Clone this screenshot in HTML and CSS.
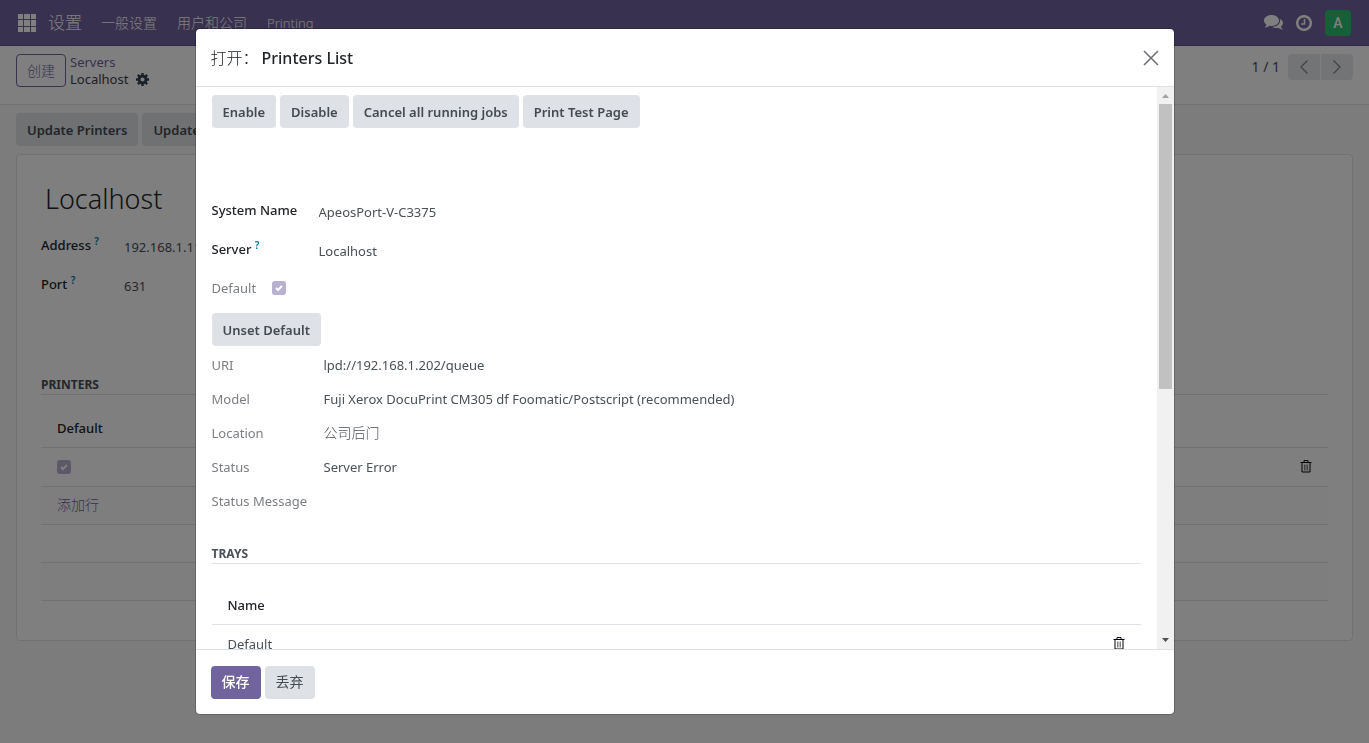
FILE: index.html
```html
<!DOCTYPE html>
<html lang="zh-CN">
<head>
<meta charset="utf-8">
<meta name="viewport" content="width=device-width, initial-scale=1">
<title>Printers List</title>
<link rel="stylesheet" href="styles.css">
</head>
<body>
<div class="app">
  <header class="navbar">
    <button class="nav-button apps" aria-label="Apps">
      <svg width="18" height="18" viewBox="0 0 18 18" fill="currentColor"><path d="M0 0h5v5H0zM6 0h6v5H6zM13 0h5v5h-5zM0 6h5v6H0zM6 6h6v6H6zM13 6h5v6h-5zM0 13h5v5H0zM6 13h6v5H6zM13 13h5v5h-5z"/></svg>
    </button>
    <a class="brand" href="#">设置</a>
    <nav class="menu">
      <a href="#">一般设置</a>
      <a href="#">用户和公司</a>
      <a href="#">Printing</a>
    </nav>
    <div class="systray">
      <button class="nav-button" aria-label="Messages">
        <svg width="19" height="16" viewBox="0 0 19 16" fill="currentColor"><path d="M7.500 0C11.700 0 15 2.400 15 5.500S11.700 11 7.500 11c-.7 0-1.300-.1-1.900-.2C4.200 11.800 2.700 12.400 1 12.600c-.4 0-.5-.4-.2-.6.800-.6 1.400-1.300 1.700-2.300C.9 8.700 0 7.200 0 5.500 0 2.400 3.300 0 7.500 0z"/><path d="M16.200 4c1.700.9 2.800 2.300 2.800 4 0 1.400-.9 2.700-2.200 3.700.3.900.8 1.500 1.600 2.100.3.200.1.600-.2.600-1.600-.1-3-.7-4.200-1.600-2.100.4-4.300.1-6-.9C12.700 12 16.700 9 16.200 4z"/></svg>
      </button>
      <button class="nav-button" aria-label="Activities">
        <svg width="16" height="16" viewBox="0 0 16 16" fill="none" stroke="currentColor"><circle cx="8" cy="8" r="6.800" stroke-width="2.500"/><path d="M8.500 4v5H5" stroke-width="1.600"/></svg>
      </button>
      <button class="avatar">A</button>
    </div>
  </header>

  <div class="control-panel">
    <button class="btn btn-outline">创建</button>
    <div class="breadcrumb">
      <a href="#">Servers</a>
      <div class="current">
        <span>Localhost</span>
        <svg width="13" height="13" viewBox="0 0 14 14" fill="none" stroke="currentColor"><circle cx="7" cy="7" r="3.700" stroke-width="3"/><path d="M7 0v2.500M7 11.500V14M0 7h2.500M11.500 7H14M2 2l1.800 1.800M10.200 10.200 12 12M12 2l-1.800 1.800M3.800 10.200 2 12" stroke-width="2.600"/></svg>
      </div>
    </div>
    <div class="pager">
      <span>1 / 1</span>
      <div class="pager-buttons">
        <button aria-label="Previous"><svg width="8" height="14" viewBox="0 0 8 14"><path d="M7.500.5 1 7l6.500 6.500" fill="none" stroke="currentColor" stroke-width="1.200"/></svg></button>
        <button aria-label="Next"><svg width="8" height="14" viewBox="0 0 8 14"><path d="M.5.500 7 7 .5 13.500" fill="none" stroke="currentColor" stroke-width="1.200"/></svg></button>
      </div>
    </div>
  </div>

  <main class="content">
    <div class="actions">
      <button class="btn">Update Printers</button>
      <button class="btn">Update Jobs</button>
    </div>
    <section class="sheet">
      <h1>Localhost</h1>
      <div class="fields server-fields">
        <label for="address">Address <sup>?</sup></label>
        <input id="address" value="192.168.1.11">
        <label for="port">Port <sup>?</sup></label>
        <input id="port" value="631">
      </div>
      <h2 class="separator printers-title">Printers</h2>
      <table class="list printers">
        <thead><tr><th>Default</th><th></th></tr></thead>
        <tbody>
          <tr>
            <td><input class="check" type="checkbox" checked disabled aria-label="Default"></td>
            <td class="trash-cell"><button class="trash" aria-label="Delete"><svg width="12" height="13" viewBox="0 0 12 13" fill="none" stroke="currentColor"><path d="M4 2V.5h4V2M2 3v9h8V3"/><path d="M.5 2.500h11"/><path d="M4.500 4.500v6M6 4.500v6M7.500 4.500v6" stroke-width=".5"/></svg></button></td>
          </tr>
          <tr><td><a class="cjk" href="#">添加行</a></td><td></td></tr>
          <tr><td></td><td></td></tr>
          <tr><td></td><td></td></tr>
        </tbody>
      </table>
    </section>
  </main>
</div>

<div class="backdrop">
  <div class="modal" role="dialog" aria-modal="true" aria-labelledby="modal-title">
    <header class="modal-header">
      <h3 id="modal-title"><span class="prefix">打开：</span>Printers List</h3>
      <button class="close" aria-label="Close"><svg width="16" height="16" viewBox="0 0 16 16"><path d="M1 1l14 14M15 1 1 15" fill="none" stroke="currentColor" stroke-width="1.600"/></svg></button>
    </header>
    <div class="modal-body">
      <div class="modal-content">
        <div class="actions">
          <button class="btn">Enable</button>
          <button class="btn">Disable</button>
          <button class="btn">Cancel all running jobs</button>
          <button class="btn">Print Test Page</button>
        </div>
        <div class="fields printer-fields">
          <label for="system-name">System Name</label>
          <input id="system-name" value="ApeosPort-V-C3375">
          <label for="server">Server <sup>?</sup></label>
          <input id="server" value="Localhost">
        </div>
        <div class="default-row">
          <label for="default">Default</label>
          <input id="default" class="check" type="checkbox" checked disabled>
        </div>
        <button class="btn">Unset Default</button>
        <dl class="details">
          <dt>URI</dt><dd>lpd://192.168.1.202/queue</dd>
          <dt>Model</dt><dd>Fuji Xerox DocuPrint CM305 df Foomatic/Postscript (recommended)</dd>
          <dt>Location</dt><dd class="cjk">公司后门</dd>
          <dt>Status</dt><dd>Server Error</dd>
          <dt>Status Message</dt><dd></dd>
        </dl>
        <h2 class="separator">Trays</h2>
        <table class="list trays">
          <thead><tr><th>Name</th><th></th></tr></thead>
          <tbody>
            <tr>
              <td>Default</td>
              <td class="trash-cell"><button class="trash" aria-label="Delete"><svg width="12" height="13" viewBox="0 0 12 13" fill="none" stroke="currentColor"><path d="M4 2V.5h4V2M2 3v9h8V3"/><path d="M.5 2.500h11"/><path d="M4.500 4.500v6M6 4.500v6M7.500 4.500v6" stroke-width=".5"/></svg></button></td>
            </tr>
          </tbody>
        </table>
      </div>
      <div class="scrollbar" aria-hidden="true">
        <svg width="7" height="4" viewBox="0 0 7 4"><path d="M0 4 3.500 0 7 4z" fill="#a3a3a3"/></svg>
        <div class="track"><div class="thumb"></div></div>
        <svg width="7" height="4" viewBox="0 0 7 4"><path d="M0 0h7L3.500 4z" fill="#505050"/></svg>
      </div>
    </div>
    <footer class="modal-footer">
      <button class="btn btn-primary">保存</button>
      <button class="btn">丢弃</button>
    </footer>
  </div>
</div>
</body>
</html>
```
FILE: styles.css
```css
* { box-sizing: border-box; }

body {
  margin: 0;
  font: 13px/20px "Noto Sans", "Noto Sans CJK SC", sans-serif;
  color: #495057;
}

button, input { font: inherit; color: inherit; }
button { border: 0; cursor: pointer; }
a { color: #71639e; text-decoration: none; }
svg { display: block; }
h1, h2, h3, dl, dd { margin: 0; }
.cjk { font-size: 14px; font-weight: 300; }

.app {
  height: 100vh;
  overflow: hidden;
  display: flex;
  flex-direction: column;
  background: #f8f9fa;
}

/* Top navigation */
.navbar {
  display: flex;
  align-items: center;
  height: 46px;
  padding: 0 18px;
  background: #71639e;
  border-bottom: 1px solid #5a4f7f;
  color: #fff;
}
.navbar a { color: #fff; }
.nav-button { padding: 0; background: none; color: #fff; }
.brand { margin-left: 12px; font-size: 17px; font-weight: 300; }
.menu { display: flex; flex: 1; gap: 20px; margin-left: 19px; font-size: 14px; font-weight: 300; }
.menu a:last-child { font-size: 13px; }
.systray { display: flex; align-items: center; gap: 13px; }
.avatar {
  width: 26px;
  height: 26px;
  padding: 0;
  border-radius: 4px;
  background: #2ac06d;
  color: #fff;
  font: 500 14px Roboto, sans-serif;
}

/* Control panel */
.control-panel {
  display: flex;
  align-items: flex-start;
  gap: 4px;
  height: 59px;
  padding: 8px 16px;
  background: #fff;
  border-bottom: 1px solid #dee2e6;
}
.breadcrumb { display: flex; flex-direction: column; line-height: 17px; }
.current { display: flex; align-items: center; gap: 8px; color: #374151; }
.pager { display: flex; align-items: center; gap: 8px; margin-left: auto; font-size: 14px; }
.pager-buttons { display: flex; gap: 1px; border-radius: 4px; overflow: hidden; }
.pager-buttons button {
  display: grid;
  place-items: center;
  width: 32px;
  height: 26px;
  padding: 0;
  background: #e7e9ed;
  color: #7d828a;
}

/* Buttons */
.btn {
  height: 33px;
  padding: 0 11px;
  border-radius: 4px;
  background: #dee2e6;
  color: #454a52;
  font-weight: 600;
  white-space: nowrap;
}
.btn-outline {
  padding: 0 10px;
  border: 1px solid #71639e;
  background: #fff;
  color: #71639e;
  font-size: 14px;
  font-weight: 300;
}
.btn-primary { background: #71639e; color: #fff; }
.actions { display: flex; gap: 4px; }

/* Server form */
.content { flex: 1; padding: 8px 16px; }
.sheet {
  height: 487px;
  margin-top: 8px;
  padding: 24px;
  background: #fff;
  border: 1px solid #dee2e6;
  border-radius: 4px;
}
.sheet h1 {
  padding-left: 4px;
  font-size: 27px;
  font-weight: 300;
  line-height: 40px;
  color: #212529;
}
.fields { display: grid; grid-auto-rows: 39px; align-items: center; }
.fields label { padding-bottom: 4px; color: #212529; font-weight: 500; }
.fields sup { color: #017e9c; font-size: 10px; font-weight: 600; line-height: 10px; vertical-align: 5px; }
.fields input { width: 100%; padding: 0; border: 0; background: none; outline: 0; }
.server-fields { grid-template-columns: 83px 1fr; margin-top: 8px; }
.separator {
  padding-top: 1px;
  border-bottom: 1px solid #dee2e6;
  color: #495057;
  font-size: 12px;
  font-weight: 700;
  line-height: 19px;
  text-transform: uppercase;
}
.printers-title { margin-top: 69px; }

/* Lists */
.list { width: 100%; border-collapse: collapse; }
.printers { margin-top: 15px; }
.trays { margin-top: 23px; }
.list th, .list td { height: 38px; padding: 0 16px; border-bottom: 1px solid #dee2e6; text-align: left; }
.list th { height: 37px; color: #212529; font-weight: 500; }
.list tbody tr:first-child td { height: 39px; }
.list tbody tr:nth-child(even) { background: #fdfdfe; }
.trash-cell { width: 44px; }
.trash { display: block; padding: 0; background: none; color: #000; }
.check {
  display: block;
  width: 14px;
  height: 14px;
  margin: 0;
  appearance: none;
  border-radius: 3px;
  background: #b8b1cf url("data:image/svg+xml,%3Csvg xmlns='http://www.w3.org/2000/svg' viewBox='0 0 14 14'%3E%3Cpath d='m4 7 2 2 4-4' fill='none' stroke='white' stroke-width='2'/%3E%3C/svg%3E");
}

/* Dialog */
.backdrop {
  position: fixed;
  inset: 0;
  display: flex;
  justify-content: center;
  padding: 28px 16px;
  background: rgba(0, 0, 0, .5);
}
.modal {
  display: flex;
  flex-direction: column;
  width: 100%;
  max-width: 980px;
  overflow: hidden;
  background: #fff;
  background-clip: padding-box;
  border: 1px solid rgba(0, 0, 0, .2);
  border-radius: 5px;
}
.modal-header {
  display: flex;
  align-items: center;
  justify-content: space-between;
  height: 58px;
  padding: 0 15px;
  border-bottom: 1px solid #dee2e6;
}
.modal-header h3 { color: #212529; font-size: 16px; font-weight: 500; }
.prefix { margin-right: 3px; font-weight: 300; }
.close { padding: 0; background: none; color: #6f7276; }
.modal-body { display: flex; flex: 1; min-height: 0; }
.modal-content { flex: 1; padding: 8px 16px; overflow: hidden; }
.printer-fields { grid-template-columns: 107px 1fr; margin-top: 64px; }
.default-row { display: flex; align-items: center; gap: 16px; height: 35px; margin-bottom: 8px; }
.default-row label, .details dt { color: #7c7f83; }
.details {
  display: grid;
  grid-template-columns: 112px 1fr;
  grid-auto-rows: 34px;
  align-items: center;
  margin: 2px 0 25px;
}
.scrollbar {
  display: flex;
  flex-direction: column;
  align-items: center;
  gap: 6px;
  width: 17px;
  padding: 7px 0;
  background: #f1f1f1;
}
.track { flex: 1; width: 13px; }
.thumb { height: 54%; background: #c1c1c1; }
.modal-footer {
  display: flex;
  align-items: center;
  gap: 4px;
  height: 65px;
  padding: 0 15px;
  border-top: 1px solid #dee2e6;
}
.modal-footer .btn { font-size: 14px; font-weight: 400; }
.modal-footer .btn-primary { font-weight: 500; }
```
